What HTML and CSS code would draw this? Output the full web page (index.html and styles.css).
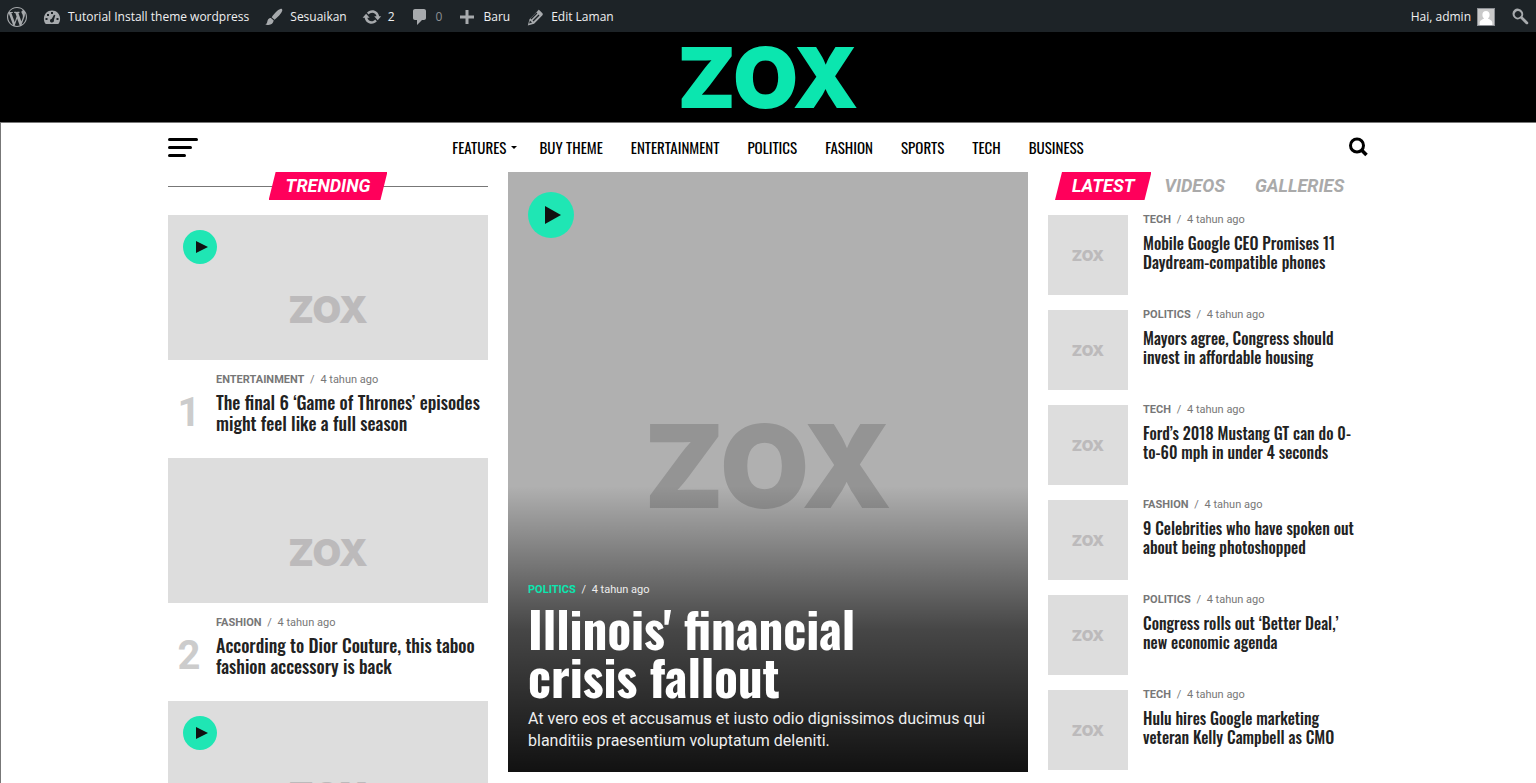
FILE: index.html
```
<!DOCTYPE html>
<html lang="id">
<head>
  <meta charset="UTF-8" />
  <meta name="viewport" content="width=device-width, initial-scale=1.0"/>
  <title>Zox News</title>
  <link rel="stylesheet" href="styles.css">
</head>
<body>

  <!-- Admin bar -->
  <div class="admin-bar">
    <div class="admin-group">
      <a href="#" class="admin-item" aria-label="WordPress">
        <svg width="20" height="20" viewBox="0 0 20 20"><path d="M20 10c0-5.510-4.490-10-10-10s-10 4.490-10 10 4.490 10 10 10 10-4.490 10-10zM7.780 15.370l-3.410-9.260c0.550-0.020 1.170-0.080 1.170-0.080 0.500-0.060 0.440-1.130-0.060-1.110 0 0-1.450 0.110-2.370 0.110-0.180 0-0.370 0-0.580-0.010 1.580-2.410 4.300-3.960 7.470-3.960 2.330 0 4.450 0.870 6.050 2.340-0.680-0.110-1.650 0.390-1.650 1.580 0 0.740 0.450 1.360 0.900 2.100 0.350 0.610 0.550 1.360 0.550 2.460 0 1.490-1.400 5-1.400 5l-3.030-8.370c0.540-0.020 0.820-0.170 0.820-0.170 0.500-0.050 0.440-1.250-0.060-1.220 0 0-1.440 0.120-2.380 0.120-0.870 0-2.330-0.120-2.330-0.120-0.500-0.030-0.560 1.200-0.060 1.220l0.920 0.080 1.260 3.410zM17.410 10c0.240-0.640 0.740-1.870 0.430-4.250 0.700 1.290 1.050 2.710 1.050 4.250 0 3.290-1.730 6.240-4.400 7.780 0.970-2.590 1.940-5.200 2.920-7.780zM6.100 18.090c-2.980-1.440-4.990-4.550-4.990-8.090 0-1.300 0.230-2.480 0.720-3.590 1.420 3.890 2.840 7.790 4.270 11.680zM10.130 11.460l2.580 6.980c-0.860 0.290-1.760 0.450-2.710 0.450-0.790 0-1.570-0.110-2.290-0.330 0.810-2.380 1.620-4.740 2.420-7.100z"/></svg>
      </a>
      <a href="#" class="admin-item">
        <svg width="20" height="20" viewBox="0 0 20 20"><path fill-rule="evenodd" d="M3.800 17h12.400c1.300-1.300 1.900-3.300 1.900-5.300 0-4.800-3.600-8.300-8.100-8.300s-8.100 3.500-8.100 8.300c0 2 .6 4 1.900 5.300zM9 5h2v2h-2zM5 7h2v2h-2zM3.500 11h2v2h-2zM14.500 11h2v2h-2zM12 7.800l1.300.5-1.400 4.800c.4 1.400-.5 2.500-1.900 2.500-1.300 0-2.200-1-2-2.200.2-1 1-1.500 1.800-1.600z"/></svg>
        <span>Tutorial Install theme wordpress</span>
      </a>
      <a href="#" class="admin-item">
        <svg width="20" height="20" viewBox="0 0 20 20"><path d="M18.300 3.270c-.08 1.570-2.600 5.500-7.800 9.500l-2.800-2.600c3.600-5.300 7.600-8.200 9.200-8.400.9-.1 1.500.6 1.400 1.500zM6.900 11l2.800 2.600c-.5 2.600-2.200 4.400-5.300 4.500-1.300 0-2.600-.3-3.400-.8 2.600-.5 1.900-2.600 2.800-4.400.7-1.300 1.800-1.900 3.100-1.900z"/></svg>
        <span>Sesuaikan</span>
      </a>
      <a href="#" class="admin-item">
        <svg width="20" height="20" viewBox="0 0 20 20"><path d="M10.200 3.280c3.530 0 6.430 2.610 6.920 6h2.080l-3.500 4-3.500-4h2.320c-.45-1.970-2.210-3.450-4.320-3.450-1.450 0-2.730.71-3.540 1.780l-1.710-1.950c1.280-1.460 3.160-2.380 5.250-2.380zM9.600 16.720c-3.520 0-6.430-2.610-6.920-6h-2.080l3.500-4c1.170 1.330 2.330 2.670 3.500 4h-2.320c.45 1.970 2.210 3.450 4.320 3.450 1.450 0 2.730-.71 3.540-1.780l1.710 1.950c-1.280 1.460-3.150 2.380-5.250 2.380z"/></svg>
        <span>2</span>
      </a>
      <a href="#" class="admin-item dim">
        <svg width="20" height="20" viewBox="0 0 20 20"><path d="M5 2h9c1.100 0 2 .9 2 2v7c0 1.100-.9 2-2 2h-2l-5 5v-5h-2c-1.100 0-2-.9-2-2v-7c0-1.100.9-2 2-2z"/></svg>
        <span>0</span>
      </a>
      <a href="#" class="admin-item">
        <svg width="20" height="20" viewBox="0 0 20 20"><path d="M17 8.500v3h-5.500v5.500h-3v-5.500h-5.500v-3h5.500v-5.500h3v5.500z"/></svg>
        <span>Baru</span>
      </a>
      <a href="#" class="admin-item">
        <svg width="20" height="20" viewBox="0 0 20 20"><path fill-rule="evenodd" d="M13.900 2.800l3.300 3.300c.8.800.8 1.700 0 2.500l-8.100 8.100-6.300 1.800 1.700-6.200 8.100-8.200c.4-.7.900-1.300 1.300-1.300zM11.500 5.600l-6 6 .9.900 6-6zM13.500 7.600l-6 6 1 1 6-6zM4.900 13.500l-.8 3 3-.9z"/></svg>
        <span>Edit Laman</span>
      </a>
    </div>
    <div class="admin-group">
      <a href="#" class="admin-item">
        <span>Hai, admin</span>
        <svg class="avatar" width="18" height="18" viewBox="0 0 18 18"><rect width="18" height="18" fill="#8c8f94"/><rect x="1" y="1" width="16" height="16" fill="#c9c9c9"/><path fill="#fff" d="M9 3c2.300 0 3.600 1.600 3.600 3.700 0 1.600-.7 2.900-1.600 3.600.2 1.300 4 1.200 4.300 4.300v2.400H2.700v-2.400c.3-3.100 4.100-3 4.300-4.300-.9-.7-1.600-2-1.600-3.600C5.400 4.600 6.700 3 9 3z"/></svg>
      </a>
      <button class="admin-item admin-search" aria-label="Cari">
        <svg width="20" height="20" viewBox="0 0 20 20"><path fill-rule="evenodd" d="M12.100 4.100a5.200 5.200 0 1 0-7.900 6.600 5.200 5.200 0 0 0 6.300.9l5.400 5.300c.6.600 1.400.6 2 0s.6-1.300 0-1.900l-5.300-5.300c1-1.800.8-4-.5-5.600zM5.700 5.100a3.200 3.200 0 1 1 4.600 4.500 3.200 3.200 0 0 1-4.600-4.500z"/></svg>
      </button>
    </div>
  </div>

  <!-- Logo -->
  <header class="site-header">
    <a href="#" class="logo">ZOX</a>
  </header>

  <div class="page">
    <div class="wrap">

      <!-- Main nav -->
      <nav class="main-nav">
        <button class="menu-btn" aria-label="Menu"><span></span><span></span><span></span></button>
        <ul class="nav-list">
          <li><a href="#" class="has-sub">Features</a></li>
          <li><a href="#">Buy Theme</a></li>
          <li><a href="#">Entertainment</a></li>
          <li><a href="#">Politics</a></li>
          <li><a href="#">Fashion</a></li>
          <li><a href="#">Sports</a></li>
          <li><a href="#">Tech</a></li>
          <li><a href="#">Business</a></li>
        </ul>
        <button class="search-btn" aria-label="Search">
          <svg width="20" height="20" viewBox="0 0 20 20" fill="none" stroke="#000"><circle cx="9" cy="8.500" r="6.500" stroke-width="3"/><path d="M13.500 13l5 5" stroke-width="3.500"/></svg>
        </button>
      </nav>

      <main class="columns">

        <!-- Trending -->
        <section class="trending">
          <h4 class="trending-head"><span class="tag">Trending</span></h4>

          <article class="trend-post">
            <a href="#" class="thumb">
              <span class="placeholder">ZOX</span>
              <span class="play"><svg width="12" height="12" viewBox="0 0 12 12"><path d="M0 0l12 6-12 6z"/></svg></span>
            </a>
            <div class="trend-row">
              <span class="num">1</span>
              <div class="trend-text">
                <p class="meta"><a href="#">Entertainment</a> / <time>4 tahun ago</time></p>
                <h2><a href="#">The final 6 ‘Game of Thrones’ episodes might feel like a full season</a></h2>
              </div>
            </div>
          </article>

          <article class="trend-post">
            <a href="#" class="thumb"><span class="placeholder">ZOX</span></a>
            <div class="trend-row">
              <span class="num">2</span>
              <div class="trend-text">
                <p class="meta"><a href="#">Fashion</a> / <time>4 tahun ago</time></p>
                <h2><a href="#">According to Dior Couture, this taboo fashion accessory is back</a></h2>
              </div>
            </div>
          </article>

          <article class="trend-post">
            <a href="#" class="thumb">
              <span class="placeholder">ZOX</span>
              <span class="play"><svg width="12" height="12" viewBox="0 0 12 12"><path d="M0 0l12 6-12 6z"/></svg></span>
            </a>
          </article>
        </section>

        <!-- Featured story -->
        <article class="feature">
          <span class="placeholder">ZOX</span>
          <span class="play play-big"><svg width="16" height="18" viewBox="0 0 16 18"><path d="M0 0l16 9-16 9z"/></svg></span>
          <div class="feature-text">
            <p class="meta"><a href="#">Politics</a> / <time>4 tahun ago</time></p>
            <h1><a href="#">Illinois' financial crisis fallout</a></h1>
            <p class="excerpt">At vero eos et accusamus et iusto odio dignissimos ducimus qui blanditiis praesentium voluptatum deleniti.</p>
          </div>
        </article>

        <!-- Latest -->
        <section class="latest">
          <div class="tabs">
            <button class="tag">Latest</button>
            <button class="tab">Videos</button>
            <button class="tab">Galleries</button>
          </div>

          <article class="latest-post">
            <a href="#" class="small-thumb"><span class="placeholder">ZOX</span></a>
            <div class="latest-text">
              <p class="meta"><a href="#">Tech</a> / <time>4 tahun ago</time></p>
              <h2><a href="#">Mobile Google CEO Promises 11 Daydream-compatible phones</a></h2>
            </div>
          </article>
          <article class="latest-post">
            <a href="#" class="small-thumb"><span class="placeholder">ZOX</span></a>
            <div class="latest-text">
              <p class="meta"><a href="#">Politics</a> / <time>4 tahun ago</time></p>
              <h2><a href="#">Mayors agree, Congress should invest in affordable housing</a></h2>
            </div>
          </article>
          <article class="latest-post">
            <a href="#" class="small-thumb"><span class="placeholder">ZOX</span></a>
            <div class="latest-text">
              <p class="meta"><a href="#">Tech</a> / <time>4 tahun ago</time></p>
              <h2><a href="#">Ford’s 2018 Mustang GT can do 0-to-60 mph in under 4 seconds</a></h2>
            </div>
          </article>
          <article class="latest-post">
            <a href="#" class="small-thumb"><span class="placeholder">ZOX</span></a>
            <div class="latest-text">
              <p class="meta"><a href="#">Fashion</a> / <time>4 tahun ago</time></p>
              <h2><a href="#">9 Celebrities who have spoken out about being photoshopped</a></h2>
            </div>
          </article>
          <article class="latest-post">
            <a href="#" class="small-thumb"><span class="placeholder">ZOX</span></a>
            <div class="latest-text">
              <p class="meta"><a href="#">Politics</a> / <time>4 tahun ago</time></p>
              <h2><a href="#">Congress rolls out ‘Better Deal,’ new economic agenda</a></h2>
            </div>
          </article>
          <article class="latest-post">
            <a href="#" class="small-thumb"><span class="placeholder">ZOX</span></a>
            <div class="latest-text">
              <p class="meta"><a href="#">Tech</a> / <time>4 tahun ago</time></p>
              <h2><a href="#">Hulu hires Google marketing veteran Kelly Campbell as CMO</a></h2>
            </div>
          </article>
        </section>

      </main>
    </div>
  </div>
</body>
</html>
```

FILE: styles.css
```
* {
  box-sizing: border-box;
}

body {
  margin: 0;
  font-family: Roboto, sans-serif;
  background: #fff;
  color: #222;
}

h1, h2, h4, p, ul {
  margin: 0;
  padding: 0;
}

a {
  color: inherit;
  text-decoration: none;
}

button {
  border: 0;
  padding: 0;
  background: none;
  font: inherit;
  cursor: pointer;
}

/* Admin bar */
.admin-bar {
  display: flex;
  justify-content: space-between;
  height: 32px;
  padding: 0 6px 0 7px;
  background: #1d2327;
  color: #f0f0f1;
  font-family: "Open Sans", sans-serif;
  font-size: 12px;
}

.admin-group {
  display: flex;
  gap: 15px;
}

.admin-item {
  display: flex;
  align-items: center;
  gap: 6px;
  padding-top: 1px;
}

.admin-item svg {
  fill: #a7aaad;
}

.dim span {
  color: #8c9094;
}

/* Header */
.site-header {
  display: flex;
  justify-content: center;
  align-items: center;
  height: 90px;
  padding-top: 2px;
  background: #000;
}

.logo {
  color: #0be6af;
  font-family: Inter, sans-serif;
  font-weight: 900;
  font-size: 84px;
  line-height: 88px;
}

.page {
  box-shadow: inset 1px 1px #777;
}

.wrap {
  max-width: 1200px;
  margin: 0 auto;
}

/* Nav */
.main-nav {
  display: flex;
  align-items: center;
  justify-content: space-between;
  height: 50px;
}

.menu-btn {
  display: flex;
  flex-direction: column;
  gap: 5px;
  width: 30px;
}

.menu-btn span {
  width: 30px;
  height: 3px;
  border-radius: 2px;
  background: #000;
}

.menu-btn span:nth-child(2) { width: 24px; }
.menu-btn span:nth-child(3) { width: 18px; }

.nav-list {
  display: flex;
  gap: 28px;
  list-style: none;
  color: #000;
  font-family: Oswald, sans-serif;
  font-weight: 400;
  font-size: 15px;
  line-height: 24px;
  text-transform: uppercase;
}

.has-sub {
  display: flex;
  align-items: center;
  gap: 5px;
  margin-right: -6px;
}

.has-sub::after {
  content: "";
  border: 3px solid transparent;
  border-top-color: #000;
  border-bottom: 0;
}

.search-btn {
  display: flex;
  justify-content: flex-end;
  width: 30px;
}

/* Columns */
.columns {
  display: grid;
  grid-template-columns: 320px 1fr 320px;
  gap: 20px;
  align-items: start;
}

.tag,
.tab {
  font-weight: 700;
  font-style: italic;
  font-size: 18px;
  line-height: 28px;
  text-transform: uppercase;
}

.tag {
  padding: 0 17px;
  color: #fff;
  background: #ff005b;
  clip-path: polygon(7px 0, 100% 0, calc(100% - 7px) 100%, 0 100%);
}

.tab {
  color: #aaa;
}

.trending-head {
  display: flex;
  align-items: center;
  margin-bottom: 15px;
}

.trending-head::before,
.trending-head::after {
  content: "";
  flex: 1;
  height: 1px;
  background: #777;
}

/* line runs under the slanted ends of the tag */
.trending-head .tag {
  margin: 0 -4px;
  position: relative;
}

.thumb,
.small-thumb {
  display: flex;
  align-items: center;
  justify-content: center;
  position: relative;
  background: #ddd;
}

.thumb {
  height: 145px;
  padding-top: 44px;
}

.placeholder {
  color: #bcbabb;
  font-family: Inter, sans-serif;
  font-weight: 900;
}

.thumb .placeholder {
  font-size: 37px;
}

.play {
  position: absolute;
  top: 15px;
  left: 15px;
  display: flex;
  align-items: center;
  justify-content: center;
  width: 34px;
  height: 34px;
  padding-left: 4px;
  border-radius: 50%;
  background: #1fe6b4;
}

.play svg {
  fill: #111;
}

.trend-post {
  margin-bottom: 24px;
}

.trend-row {
  display: flex;
  padding-top: 12px;
}

.num {
  width: 48px;
  padding: 20px 6px 0 0;
  color: #ccc;
  font-weight: 700;
  font-size: 40px;
  line-height: 42px;
  text-align: center;
}

.trend-text,
.latest-text {
  flex: 1;
}

.latest-text {
  padding-right: 6px;
}

.meta {
  color: #777;
  font-size: 11px;
  line-height: 16px;
}

.meta a {
  margin-right: 3px;
  font-weight: 700;
  text-transform: uppercase;
}

.meta time {
  margin-left: 3px;
}

h1, h2 {
  font-family: Oswald, sans-serif;
}

h2 {
  font-weight: 500;
}

.trend-text h2 {
  margin-top: 4px;
  font-size: 18px;
  line-height: 21px;
}

/* Feature */
.feature {
  display: flex;
  justify-content: center;
  position: relative;
  height: 600px;
  background: #b0b0b0;
}

.feature .placeholder {
  padding-top: 226px;
  color: #949494;
  font-size: 115px;
  line-height: 138px;
}

.play-big {
  top: 20px;
  left: 20px;
  width: 46px;
  height: 46px;
}

.feature-text {
  position: absolute;
  left: 0;
  right: 0;
  bottom: 0;
  padding: 96px 20px 20px;
  color: #fff;
  background: linear-gradient(to bottom, transparent, rgba(0, 0, 0, 0.6) 50%, rgba(0, 0, 0, 0.9));
}

.feature .meta {
  color: #eee;
}

.feature .meta a {
  color: #0be6af;
}

h1 {
  max-width: 400px;
  margin: 6px 0 8px;
  font-weight: 700;
  font-size: 49px;
  line-height: 48px;
}

.excerpt {
  color: #eee;
  font-size: 16px;
  line-height: 22px;
}

/* Latest */
.tabs {
  display: flex;
  gap: 30px;
  margin-bottom: 15px;
  padding-left: 7px;
}

.tabs .tag {
  margin-right: -17px;
}

.latest-post {
  display: flex;
  gap: 15px;
  margin-bottom: 15px;
}

.small-thumb {
  width: 80px;
  height: 80px;
}

.small-thumb .placeholder {
  font-size: 15px;
}

.latest-text .meta {
  line-height: 10px;
}

.latest-text h2 {
  margin-top: 9px;
  font-size: 16px;
  line-height: 19px;
}
```
